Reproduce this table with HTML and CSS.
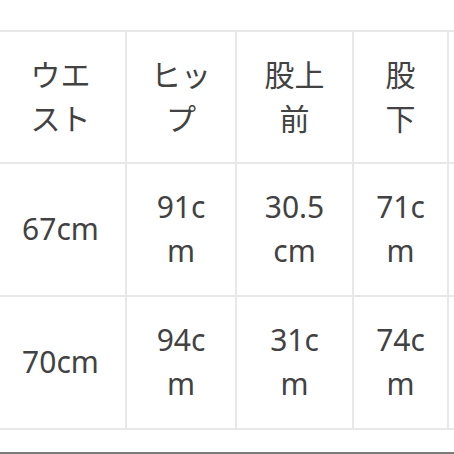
FILE: index.html
```html
<!DOCTYPE html>
<html lang="ja">
<head>
<meta charset="utf-8">
<link rel="stylesheet" href="styles.css">
</head>
<body>
<div class="page">
  <table class="size-table">
    <colgroup>
      <col class="c1"><col class="c2"><col class="c3"><col class="c4"><col class="c5">
    </colgroup>
    <tr>
      <td>ウエスト</td><td>ヒップ</td><td>股上前</td><td>股下</td><td></td>
    </tr>
    <tr>
      <td>67cm</td><td>91cm</td><td>30.5cm</td><td>71cm</td><td></td>
    </tr>
    <tr>
      <td>70cm</td><td>94cm</td><td>31cm</td><td>74cm</td><td></td>
    </tr>
  </table>
  <div class="bottom-rule"></div>
</div>
</body>
</html>
```

FILE: styles.css
```css
html, body {
  margin: 0;
  padding: 0;
  background: #fff;
}
.page {
  width: 454px;
  height: 454px;
  overflow: hidden;
  position: relative;
  padding-top: 30px;
  box-sizing: border-box;
  font-family: "Noto Sans", "Noto Sans CJK JP", sans-serif;
  color: #424242;
}
.size-table {
  border-collapse: collapse;
  table-layout: fixed;
  width: 560px;
  margin-left: -6px;
}
.c1 { width: 131px; }
.c2 { width: 110px; }
.c3 { width: 117px; }
.c4 { width: 95px; }
.c5 { width: 107px; }
.size-table td {
  border: 2px solid #e8e8e8;
  padding: 21px 22px 22px 22px;
  font-size: 30px;
  line-height: 44px;
  text-align: center;
  vertical-align: middle;
  word-break: break-all;
}
.size-table tr:first-child td {
  padding-bottom: 21px;
}
.bottom-rule {
  position: absolute;
  left: 0;
  right: 0;
  bottom: 0;
  height: 2px;
  background: #7a7a7a;
}
```
